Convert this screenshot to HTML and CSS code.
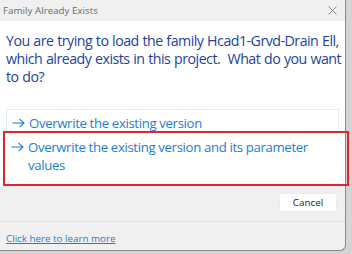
FILE: index.html
```html
<!DOCTYPE html>
<html lang="en">
<head>
    <meta charset="UTF-8">
    <title>Family Already Exists</title>
    <link rel="stylesheet" href="styles.css">
</head>
<body>
    <div class="dialog">
        <div class="titlebar">
            <span class="title">Family Already Exists</span>
            <svg class="close" width="9" height="9" viewBox="0 0 9 9">
                <path d="M0.5 0.5 L8.5 8.5 M8.5 0.5 L0.5 8.5" stroke="#8a8a8a" stroke-width="1" fill="none"/>
            </svg>
        </div>

        <div class="content">
            <p class="message">You are trying to load the family Hcad1-Grvd-Drain Ell, which already exists in this project.&nbsp; What do you want to do?</p>
            <div class="options">
                <a class="option option-first" href="#">
                    <svg class="arrow" width="13" height="10" viewBox="0 0 13 10">
                        <path d="M0.5 5 H12 M7.5 0.8 L12 5 L7.5 9.2" stroke="currentColor" stroke-width="1.1" fill="none"/>
                    </svg>
                    <span class="label">Overwrite the existing version</span>
                </a>
                <a class="option option-second" href="#">
                    <svg class="arrow" width="13" height="10" viewBox="0 0 13 10">
                        <path d="M0.5 5 H12 M7.5 0.8 L12 5 L7.5 9.2" stroke="currentColor" stroke-width="1.1" fill="none"/>
                    </svg>
                    <span class="label">Overwrite the existing version and its parameter values</span>
                </a>
            </div>
        </div>

        <div class="actions">
            <button type="button">Cancel</button>
        </div>

        <div class="footer">
            <a href="#">Click here to learn more</a>
        </div>
    </div>

    <!-- red annotation frame over the second option -->
    <div class="highlight"></div>
</body>
</html>
```

FILE: styles.css
```css
body {
    margin: 0;
    width: 352px;
    height: 254px;
    overflow: hidden;
    background-color: #d4d4d4;
    font-family: "Open Sans", "Noto Sans", sans-serif;
    position: relative;
}
.dialog {
    width: 345px;
    height: 250px;
    background-color: #f0f0f0;
    border-right: 1px solid #8a8a8a;
    border-bottom: 1px solid #8a8a8a;
    border-bottom-right-radius: 6px;
    display: flex;
    flex-direction: column;
    overflow: hidden;
}
.titlebar {
    height: 21px;
    display: flex;
    align-items: center;
    justify-content: space-between;
    padding: 0 8px 0 3px;
    background-color: #f0f0f0;
}
.title {
    font-size: 9.8px;
    color: #6b6b6b;
}
.content {
    background-color: #fff;
    padding: 11px 6px 0 6px;
}
.message {
    margin: 0 -6px 0 0;
    font-size: 14.2px;
    line-height: 18px;
    color: #1d3fa6;
    letter-spacing: -0.5px;
    word-spacing: 0.5px;
}
.options {
    margin-top: 23px;
}
.option {
    display: flex;
    align-items: flex-start;
    gap: 4px;
    text-decoration: none;
    color: #1e7bd6;
    font-size: 13.2px;
    line-height: 18px;
    padding-left: 5px;
    letter-spacing: -0.35px;
}
.option-first {
    padding-top: 4px;
    height: 18px;
    border: 1px solid #e4eef7;
    border-bottom: none;
}
.option-second {
    padding-top: 6px;
    padding-bottom: 12px;
}
.arrow {
    flex-shrink: 0;
    margin-top: 4px;
}
.actions {
    display: flex;
    justify-content: flex-end;
    padding: 7px 8px 9px 0;
    border-bottom: 1px solid #e0e0e0;
}
button {
    width: 58px;
    height: 19px;
    background-color: #fff;
    border: 1px solid #ececec;
    border-radius: 2px;
    font-family: "Open Sans", "Noto Sans", sans-serif;
    font-size: 9.8px;
    color: #222;
    padding: 0;
}
.footer {
    padding: 8px 6px 0 6px;
    font-size: 9.8px;
    line-height: 18px;
}
.footer a {
    color: #2b79cf;
}
.highlight {
    position: absolute;
    left: 3px;
    top: 131px;
    width: 342px;
    height: 51px;
    border: 2px solid #e3262d;
}
```
